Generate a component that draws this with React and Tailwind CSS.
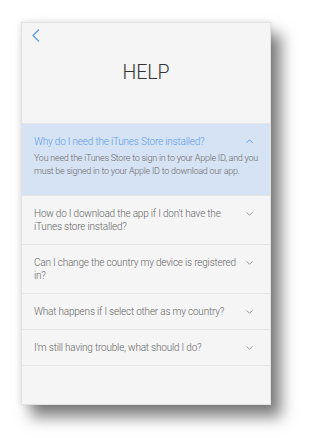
const faqs = [
  {
    q: "Why do I need the iTunes Store installed?",
    a: "You need the iTunes Store to sign in to your Apple ID, and you must be signed in to your Apple ID to download our app.",
    open: true,
  },
  { q: "How do I download the app if I don't have the iTunes store installed?" },
  { q: "Can I change the country my device is registered in?" },
  { q: "What happens if I select other as my country?" },
  { q: "I'm still having trouble, what should I do?" },
];

function Chevron({ up, className }) {
  return (
    <svg width="7" height="4" viewBox="0 0 7 4" fill="none" className={className}>
      <path
        d={up ? "M0.5 3.8 L3.5 0.8 L6.5 3.8" : "M0.5 0.3 L3.5 3.3 L6.5 0.3"}
        stroke="currentColor"
        strokeWidth="1"
      />
    </svg>
  );
}

export default function App() {
  return (
    <div className="w-[313px] h-[438px] bg-white overflow-hidden font-['Roboto',sans-serif]">
      <div className="ml-[21px] mt-[22px] w-[250px] h-[383px] bg-[#f5f5f5] border border-[#e2e2e2] shadow-[0_0_6px_rgba(0,0,0,0.12),10px_12px_14px_rgba(0,0,0,0.5)] flex flex-col">
        <div className="h-[100px] flex flex-col">
          <div className="pt-[6px] pl-[10px] text-[#5b9ae6]">
            <svg width="8" height="13" viewBox="0 0 8 13" fill="none">
              <path d="M7 0.5 L1 6.5 L7 12.5" stroke="currentColor" strokeWidth="1.2" />
            </svg>
          </div>
          <h1 className="mt-[20px] text-center text-[19.5px] leading-[22px] font-light text-[#333]">
            HELP
          </h1>
        </div>
        <div className="border-t border-[#e6e6e6]">
          {faqs.map((f) =>
            f.open ? (
              <div key={f.q} className="bg-[#d6e3f4] pl-[12px] pr-[17px] pt-[11px] pb-[17px] border-b border-[#e4e4e4]">
                <div className="flex items-start justify-between">
                  <div className="text-[10px] leading-[13px] font-light tracking-[-0.2px] text-[#5d9be8]">{f.q}</div>
                  <Chevron up className="mt-[4px] text-[#5d9be8]" />
                </div>
                <div className="mt-[4px] w-[226px] text-[9px] leading-[13px] font-light tracking-[-0.25px] text-[#6a6a6a]">{f.a}</div>
              </div>
            ) : (
              <div key={f.q} className="flex items-start justify-between pl-[12px] pr-[17px] py-[11px] border-b border-[#e4e4e4]">
                <div className="w-[206px] text-[10px] leading-[13px] font-light tracking-[-0.2px] text-[#666]">{f.q}</div>
                <Chevron className="mt-[5px] text-[#9a9a9a]" />
              </div>
            )
          )}
        </div>
      </div>
    </div>
  );
}
